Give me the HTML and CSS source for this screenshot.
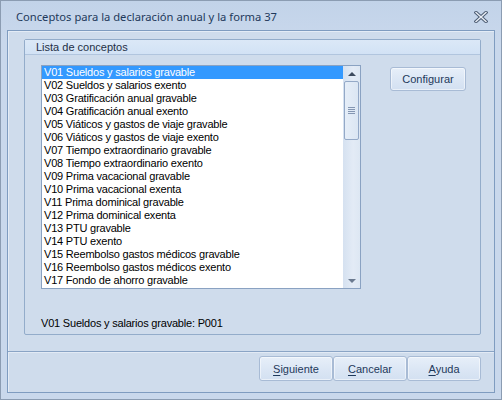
FILE: index.html
```html
<!DOCTYPE html>
<html>
<head>
<meta charset="utf-8">
<link rel="stylesheet" href="styles.css">
</head>
<body>
<div class="window">
  <div class="titlebar">
    <span class="title">Conceptos para la declaración anual y la forma 37</span>
    <svg class="close" width="14" height="12" viewBox="0 0 14 12">
      <path d="M2 1.5 L12 10.5 M12 1.5 L2 10.5" stroke="#4d5d74" stroke-width="3.4" stroke-linecap="square" fill="none"/>
      <path d="M2 1.5 L12 10.5 M12 1.5 L2 10.5" stroke="#e9eef5" stroke-width="1.4" stroke-linecap="square" fill="none"/>
    </svg>
  </div>
  <div class="panel">
    <div class="content">
      <div class="group">
        <div class="group-header">Lista de conceptos</div>
        <div class="group-body">
          <div class="list-row">
            <div class="listbox">
              <ul class="items">
                <li class="selected">V01 Sueldos y salarios gravable</li>
                <li>V02 Sueldos y salarios exento</li>
                <li>V03 Gratificación anual gravable</li>
                <li>V04 Gratificación anual exento</li>
                <li>V05 Viáticos y gastos de viaje gravable</li>
                <li>V06 Viáticos y gastos de viaje exento</li>
                <li>V07 Tiempo extraordinario gravable</li>
                <li>V08 Tiempo extraordinario exento</li>
                <li>V09 Prima vacacional gravable</li>
                <li>V10 Prima vacacional exenta</li>
                <li>V11 Prima dominical gravable</li>
                <li>V12 Prima dominical exenta</li>
                <li>V13 PTU gravable</li>
                <li>V14 PTU exento</li>
                <li>V15 Reembolso gastos médicos gravable</li>
                <li>V16 Reembolso gastos médicos exento</li>
                <li>V17 Fondo de ahorro gravable</li>
              </ul>
              <div class="scrollbar">
                <div class="arrow up"></div>
                <div class="thumb"><span class="grip"></span></div>
                <div class="track"></div>
                <div class="arrow down"></div>
              </div>
            </div>
            <button class="btn configurar">Configurar</button>
          </div>
          <div class="status">V01 Sueldos y salarios gravable: P001</div>
        </div>
      </div>
    </div>
    <div class="footer">
      <button class="btn foot"><u>S</u>iguiente</button>
      <button class="btn foot"><u>C</u>ancelar</button>
      <button class="btn foot"><u>A</u>yuda</button>
    </div>
  </div>
</div>
</body>
</html>
```
FILE: styles.css
```css
html, body {
  margin: 0;
  padding: 0;
}
body {
  width: 502px;
  height: 400px;
  overflow: hidden;
  font-family: "Liberation Sans", Arial, sans-serif;
  font-size: 11px;
}
.window {
  box-sizing: border-box;
  width: 502px;
  height: 400px;
  border: 1px solid #8b9cb2;
  background: linear-gradient(#c2d3e9, #c9d8ec 40px, #c9d8ec);
  padding: 0 6px 6px 6px;
  display: flex;
  flex-direction: column;
}
.titlebar {
  height: 29px;
  display: flex;
  align-items: center;
  justify-content: space-between;
  padding: 0 7px 0 9px;
  flex: none;
}
.title {
  font-family: "Noto Sans", "Open Sans", sans-serif;
  font-size: 11.2px;
  color: #1e395b;
  margin-top: 1px;
}
.close {
  display: block;
  margin-top: 2px;
}
.panel {
  flex: 1;
  box-sizing: border-box;
  border: 1px solid #7f9cc0;
  box-shadow: inset 1px 1px 0 #e4ecf6;
  background: #cfdcec;
  display: flex;
  flex-direction: column;
}
.content {
  padding: 8px 13px 16px 16px;
  border-bottom: 1px solid #8aa4c5;
  box-shadow: 0 1px 0 #e2eaf5;
}
.group {
  border: 1px solid #93acca;
  border-radius: 2px;
  height: 296px;
  box-sizing: border-box;
  display: flex;
  flex-direction: column;
}
.group-header {
  height: 14px;
  line-height: 14px;
  padding-left: 11px;
  background: linear-gradient(#dbe8f7, #d2e2f5);
  border-bottom: 1px solid #b1c5de;
  color: #1e2f45;
  font-size: 11px;
}
.group-body {
  padding: 10px 14px 0 16px;
  display: flex;
  flex-direction: column;
}
.list-row {
  display: flex;
  justify-content: space-between;
  align-items: flex-start;
}
.listbox {
  width: 320px;
  height: 224px;
  box-sizing: border-box;
  border: 1px solid #8aa2c2;
  background: #fff;
  display: flex;
}
.items {
  list-style: none;
  margin: 0;
  padding: 0;
  flex: 1;
}
.items li {
  height: 13px;
  line-height: 13px;
  padding-left: 2px;
  white-space: nowrap;
  color: #000;
  letter-spacing: -0.2px;
}
.items li.selected {
  background: #3399ff;
  color: #fff;
}
.scrollbar {
  width: 17px;
  background: linear-gradient(90deg, #d5e1f0, #e3ebf6 60%, #dde7f3);
  display: flex;
  flex-direction: column;
  align-items: center;
}
.arrow {
  width: 0;
  height: 0;
  border-left: 4px solid transparent;
  border-right: 4px solid transparent;
  flex: none;
}
.arrow.up {
  border-bottom: 4px solid #3c4a5e;
  margin: 6px 0 5px;
}
.arrow.down {
  border-top: 4px solid #6b7a90;
  margin: 0 0 5px;
}
.thumb {
  width: 15px;
  height: 59px;
  box-sizing: border-box;
  border: 1px solid #94a9c7;
  border-radius: 2px;
  background: linear-gradient(90deg, #e6eef8, #dbe6f3);
  display: flex;
  align-items: center;
  justify-content: center;
  flex: none;
}
.grip {
  width: 7px;
  height: 7px;
  background: repeating-linear-gradient(#8496b2 0 1px, transparent 1px 2px);
}
.track {
  flex: 1;
}
.btn {
  font-family: "Liberation Sans", Arial, sans-serif;
  font-size: 11px;
  color: #1e395b;
  border: 1px solid #a8bbd5;
  border-radius: 3px;
  background: linear-gradient(#e7eff9, #dce7f5 50%, #d3e0f1);
  box-shadow: inset 0 0 0 1px rgba(255,255,255,0.5);
  padding: 0;
  margin: 0;
}
.configurar {
  width: 76px;
  height: 24px;
  margin-top: 2px;
}
.status {
  margin-top: 28px;
  height: 13px;
  line-height: 13px;
  color: #000;
  letter-spacing: -0.2px;
}
.footer {
  display: flex;
  justify-content: flex-end;
  padding: 4px 13px 0 0;
}
.foot {
  width: 74px;
  height: 25px;
}
.foot u {
  text-decoration-thickness: 1px;
  text-underline-offset: 2px;
}
```
